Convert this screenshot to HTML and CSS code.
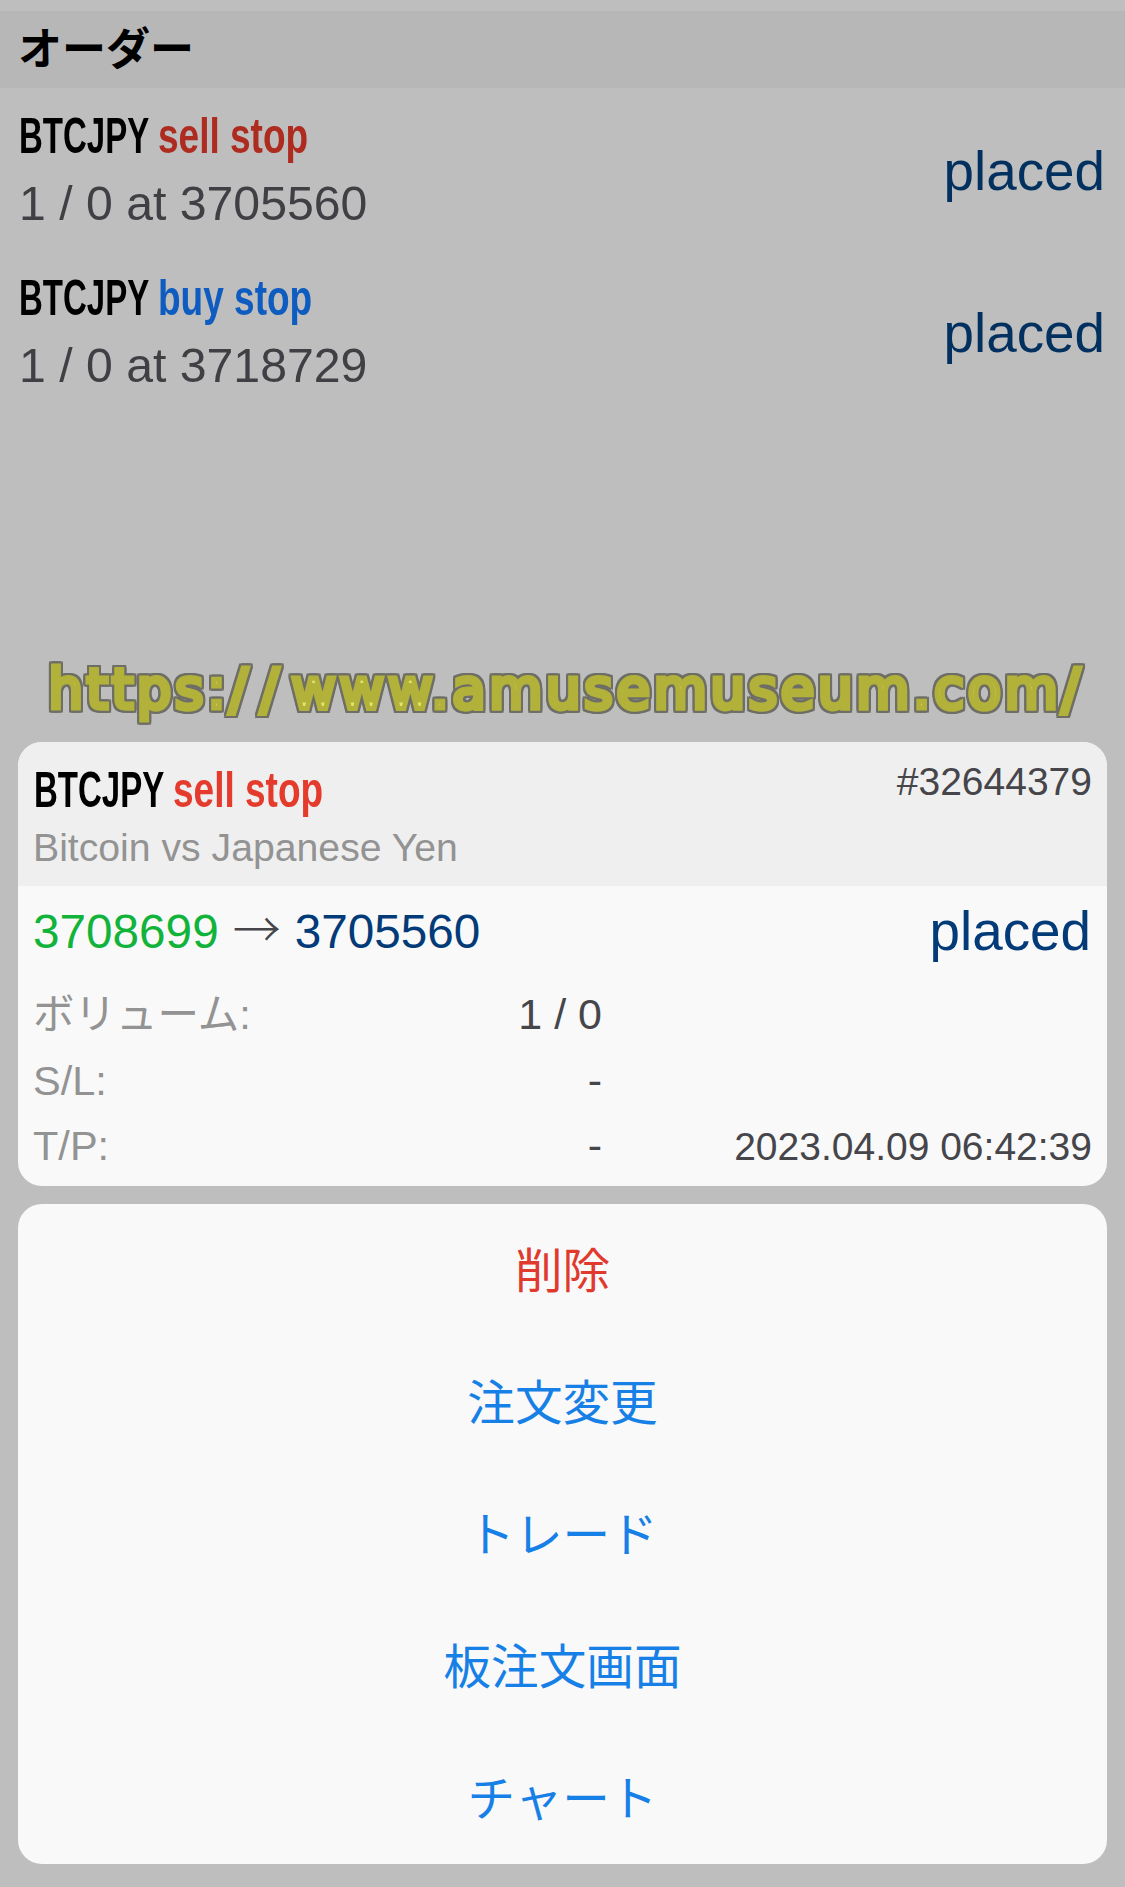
FILE: index.html
```html
<!DOCTYPE html>
<html lang="ja">
<head>
<meta charset="utf-8">
<title>オーダー</title>
<link rel="stylesheet" href="styles.css">
</head>
<body>
<header class="band"><h1 class="band-title">オーダー</h1></header>
<section class="orders">
  <div class="order">
    <div class="order-main">
      <div class="sym-line"><span class="sym">BTCJPY</span><span class="type dim-sell">sell stop</span></div>
      <div class="order-sub">1 / 0 at 3705560</div>
    </div>
    <div class="status dim">placed</div>
  </div>
  <div class="order">
    <div class="order-main">
      <div class="sym-line"><span class="sym">BTCJPY</span><span class="type dim-buy">buy stop</span></div>
      <div class="order-sub">1 / 0 at 3718729</div>
    </div>
    <div class="status dim">placed</div>
  </div>
</section>
<div class="watermark">https:<span class="slash">/</span><span class="slash">/</span>www.amusemuseum.com<span class="slash">/</span></div>
<section class="card">
  <div class="card-head">
    <div class="card-head-row">
      <div class="sym-line"><span class="sym">BTCJPY</span><span class="type sell">sell stop</span></div>
      <div class="ticket">#32644379</div>
    </div>
    <div class="desc">Bitcoin vs Japanese Yen</div>
  </div>
  <div class="card-body">
    <div class="price-row">
      <div class="prices"><span class="open">3708699</span><span class="arrow">→</span><span class="current">3705560</span></div>
      <div class="status">placed</div>
    </div>
    <div class="detail"><span class="label">ボリューム:</span><span class="value">1 / 0</span></div>
    <div class="detail"><span class="label">S/L:</span><span class="value">-</span></div>
    <div class="detail"><span class="label">T/P:</span><span class="value">-</span><span class="time">2023.04.09 06:42:39</span></div>
  </div>
</section>
<nav class="actions">
  <div class="action danger">削除</div>
  <div class="action">注文変更</div>
  <div class="action">トレード</div>
  <div class="action">板注文画面</div>
  <div class="action">チャート</div>
</nav>
</body>
</html>
```
FILE: styles.css
```css
* { box-sizing: border-box; }
html, body { margin: 0; padding: 0; }
body {
  width: 1125px;
  height: 1887px;
  overflow: hidden;
  background: #bebebe;
  font-family: "Liberation Sans", "Noto Sans CJK JP", sans-serif;
  color: #3c3c40;
  padding-top: 11px;
}
.band {
  height: 77px;
  background: #b7b7b7;
  padding: 0 0 7px 18px;
  display: flex;
  align-items: center;
}
.band-title {
  margin: 0;
  font: 700 44px/1 "Noto Sans CJK JP", sans-serif;
  color: #000;
}
.orders { height: 555px; }
.order {
  height: 162px;
  padding: 4px 20px 0 19px;
  display: flex;
  justify-content: space-between;
  align-items: center;
}
.order-main { display: flex; flex-direction: column; }
.sym-line {
  height: 64px;
  white-space: nowrap;
  font: 700 50px/64px "Liberation Sans Narrow", "Liberation Sans", sans-serif;
}
.sym, .type {
  display: inline-block;
  transform-origin: left center;
}
.sym {
  color: #000;
  transform: scaleX(.66);
  width: 197px;
  margin-right: -58px;
}
.type {
  transform: scaleX(.74);
}
.dim-sell { color: #ae2b20; }
.dim-buy { color: #0f5cc0; }
.sell { color: #e53b2d; }
.order-sub { font-size: 48.2px; line-height: 70px; color: #3f3f44; }
.status { font-size: 54.8px; line-height: 64px; color: #033a78; }
.status.dim { color: #02305f; }
.watermark {
  height: 99px;
  padding: 1px 0 0 16px;
  text-align: center;
  white-space: nowrap;
  font: 400 54.5px/90px "DejaVu Sans", sans-serif;
  letter-spacing: 3.7px;
  color: #e4e46a;
  -webkit-text-stroke: 5px #b2b23a;
  filter: drop-shadow(2px 0 0 #6e6e66) drop-shadow(-2px 0 0 #6e6e66) drop-shadow(0 2px 0 #6e6e66) drop-shadow(0 -2px 0 #6e6e66);
}
.slash { letter-spacing: 12.7px; }
.card, .actions {
  width: 1089px;
  margin-left: 18px;
  border-radius: 24px;
  background: #f9f9f9;
  overflow: hidden;
}
.card { height: 444px; }
.card-head { height: 144px; background: #efefef; padding: 16px 15px 0 16px; }
.card-head-row { display: flex; justify-content: space-between; }
.ticket { font-size: 39px; line-height: 48px; color: #45454a; }
.desc { margin-left: -1px; font-size: 39.2px; line-height: 52px; color: #939393; }
.card-body { padding: 0 15px; }
.price-row {
  height: 90px;
  margin-bottom: 6px;
  padding-right: 1px;
  display: flex;
  justify-content: space-between;
  align-items: center;
}
.prices { font-size: 47.7px; display: flex; align-items: center; }
.open { color: #12b33a; }
.current { color: #033a78; }
.arrow {
  color: #45454a;
  margin: 0 14px;
  padding-bottom: 10px;
  font: 300 48px/1 "Noto Sans CJK JP", sans-serif;
}
.detail {
  height: 65.5px;
  display: grid;
  grid-template-columns: 569px 1fr;
  align-items: baseline;
  line-height: 65px;
}
.detail .label { font-size: 41.5px; color: #939393; grid-column: 1; grid-row: 1; }
.detail .value { font-size: 43px; color: #45454a; grid-column: 1; grid-row: 1; justify-self: end; }
.detail .time { font-size: 39px; color: #45454a; grid-column: 2; grid-row: 1; justify-self: end; }
.actions { margin-top: 18px; height: 660px; }
.action {
  height: 132px;
  padding-bottom: 4px;
  display: flex;
  align-items: center;
  justify-content: center;
  font: 400 47.6px/1 "Noto Sans CJK JP", sans-serif;
  color: #1780e6;
}
.action.danger { color: #e03a2e; }
```
